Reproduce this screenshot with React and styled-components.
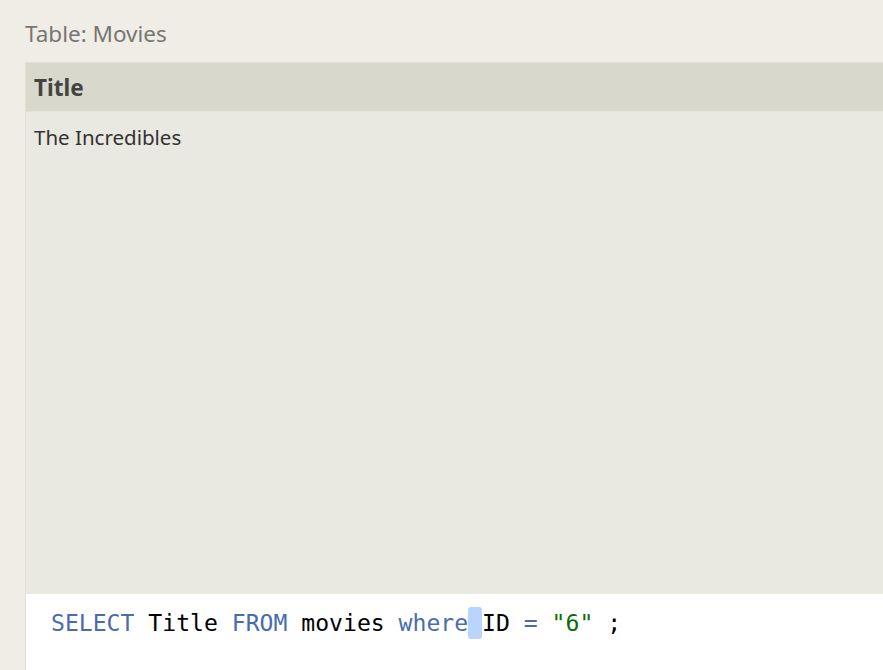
import React from "react";
import styled, { createGlobalStyle } from "styled-components";

const GlobalStyle = createGlobalStyle`
  html, body {
    margin: 0;
    padding: 0;
    background: #efede6;
    overflow: hidden;
  }
`

const Page = styled.div`
  width: 883px;
  height: 670px;
  padding-left: 25px;
  box-sizing: border-box;
  display: flex;
  flex-direction: column;
  font-family: "Noto Sans", "Open Sans", sans-serif;
`

const Caption = styled.div`
  height: 62px;
  display: flex;
  align-items: center;
  padding-top: 4px;
  box-sizing: border-box;
  font-size: 22.5px;
  color: #777673;
`

const Panel = styled.div`
  flex: 1;
  display: flex;
  flex-direction: column;
  border-left: 1px solid #e2dfd7;
  background: #e9e8e1;
  min-height: 0;
`

const HeaderRow = styled.div`
  height: 50px;
  box-sizing: border-box;
  display: flex;
  align-items: center;
  padding-left: 8px;
  background: #d9d8cc;
  border-top: 1px solid #e2e0d8;
  border-bottom: 1px solid #e2e1d9;
  font-size: 22.5px;
  font-weight: 700;
  color: #444343;
`

const Row = styled.div`
  height: 50px;
  display: flex;
  align-items: center;
  padding-left: 8px;
  font-size: 20.5px;
  color: #333;
`

const Rows = styled.div`
  flex: 1;
`

const Editor = styled.div`
  height: 76px;
  box-sizing: border-box;
  background: #fff;
  padding: 14px 0 0 25px;
  font-family: "DejaVu Sans Mono", "Liberation Mono", monospace;
  font-size: 23.1px;
  line-height: 30px;
  color: #000;
  white-space: pre;
`

const Token = styled.span`
  color: ${(p) => (p.kind === "kw" ? "#4a6bb2" : p.kind === "str" ? "#0b6b0b" : "#000")};
`

const Selected = styled.span`
  background: #b9d5fb;
  border-radius: 3px;
  padding: 3px 0;
`

function App() {
  return (
    <>
      <GlobalStyle />
      <Page>
        <Caption>Table: Movies</Caption>
        <Panel>
          <HeaderRow>Title</HeaderRow>
          <Rows>
            <Row>The Incredibles</Row>
          </Rows>
          <Editor>
            <Token kind="kw">SELECT</Token>{" Title "}<Token kind="kw">FROM</Token>{" movies "}
            <Token kind="kw">where</Token><Selected>{" "}</Selected>{"ID "}<Token kind="kw">=</Token>{" "}
            <Token kind="str">"6"</Token>{" ;"}
          </Editor>
        </Panel>
      </Page>
    </>
  )
}

export default App
